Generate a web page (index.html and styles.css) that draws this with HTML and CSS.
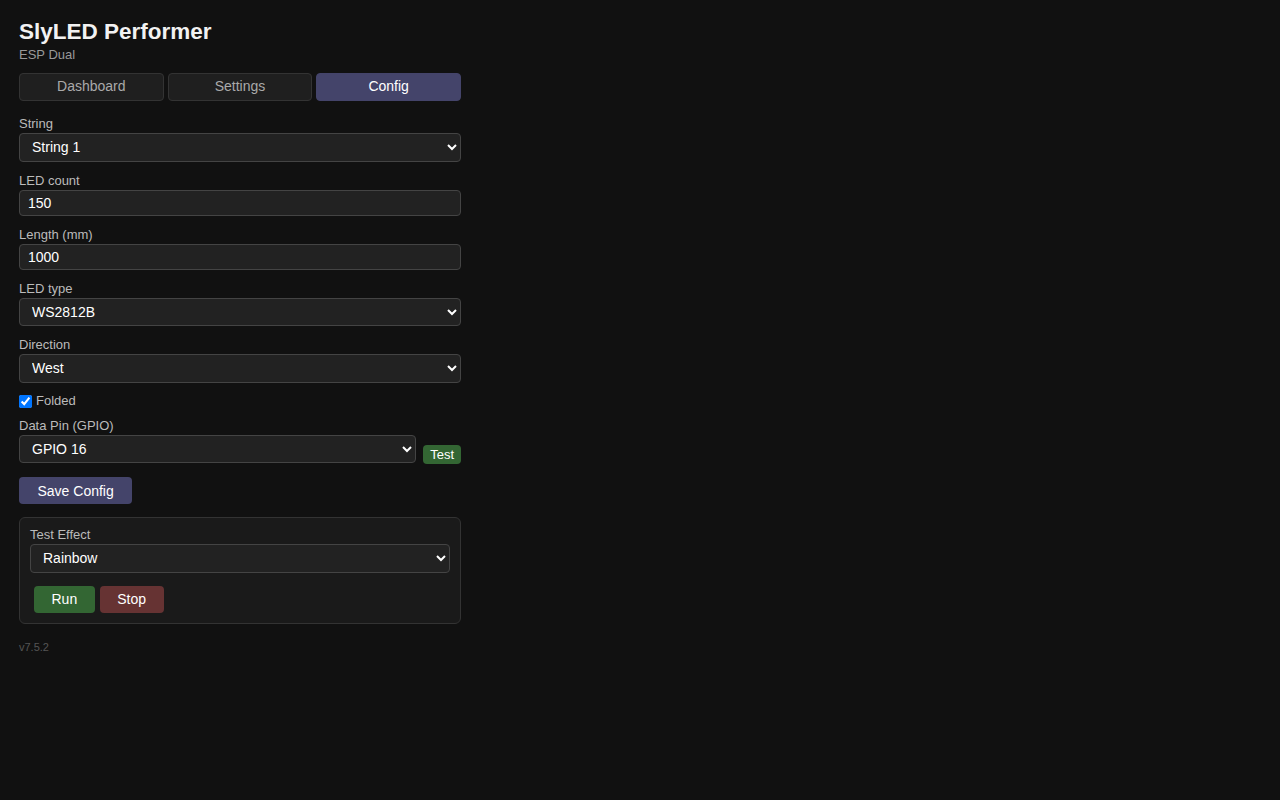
FILE: index.html
```html
<!DOCTYPE html>
<html lang="en">
<head>
<meta charset="utf-8">
<title>SlyLED Performer</title>
<link rel="stylesheet" href="styles.css">
</head>
<body>
<div class="wrap">
  <h1 class="title">SlyLED Performer</h1>
  <div class="sub">ESP Dual</div>
  <nav class="tabs">
    <button class="tab">Dashboard</button>
    <button class="tab">Settings</button>
    <button class="tab active">Config</button>
  </nav>

  <div class="field">
    <label class="lbl">String</label>
    <select class="ctl sel"><option>String 1</option></select>
  </div>
  <div class="field">
    <label class="lbl">LED count</label>
    <input class="ctl inp" type="text" value="150">
  </div>
  <div class="field">
    <label class="lbl">Length (mm)</label>
    <input class="ctl inp" type="text" value="1000">
  </div>
  <div class="field">
    <label class="lbl">LED type</label>
    <select class="ctl sel"><option>WS2812B</option></select>
  </div>
  <div class="field">
    <label class="lbl">Direction</label>
    <select class="ctl sel"><option>West</option></select>
  </div>
  <label class="check"><input type="checkbox" checked> Folded</label>
  <div class="field">
    <label class="lbl">Data Pin (GPIO)</label>
    <div class="pinrow">
      <select class="ctl sel"><option>GPIO 16</option></select>
      <button class="btn-test">Test</button>
    </div>
  </div>
  <button class="btn btn-save">Save Config</button>

  <div class="card">
    <label class="lbl">Test Effect</label>
    <select class="ctl sel"><option>Rainbow</option></select>
    <div class="actions">
      <button class="btn btn-run">Run</button>
      <button class="btn btn-stop">Stop</button>
    </div>
  </div>
  <div class="ver">v7.5.2</div>
</div>
</body>
</html>
```
FILE: styles.css
```css
html, body {
  margin: 0;
  padding: 0;
  background: #111111;
  color: #eeeeee;
  font-family: "Liberation Sans", Arial, sans-serif;
  color-scheme: dark;
}
.wrap {
  width: 442px;
  padding: 18px 19px 0;
}
.title {
  margin: 0;
  font-size: 22.5px;
  line-height: 28px;
  font-weight: bold;
  color: #f2f2f2;
}
.sub {
  font-size: 13px;
  line-height: 18px;
  color: #999999;
}
.tabs {
  display: flex;
  gap: 4px;
  margin-top: 9px;
  margin-bottom: 14px;
}
.tab {
  flex: 1;
  height: 28px;
  background: #1f1f1f;
  border: 1px solid #333333;
  border-radius: 4px;
  color: #aaaaaa;
  font-family: inherit;
  font-size: 14px;
  padding: 0 0 2px;
}
.tab.active {
  background: #44446a;
  border-color: #44446a;
  color: #ffffff;
}
.field {
  display: flex;
  flex-direction: column;
  margin-bottom: 10px;
}
.lbl {
  font-size: 13px;
  line-height: 18px;
  color: #bbbbbb;
  margin-bottom: 0;
}
.ctl {
  box-sizing: border-box;
  width: 100%;
  background: #222222;
  border: 1px solid #444444;
  border-radius: 4px;
  color: #ffffff;
  font-family: inherit;
  font-size: 14px;
  margin: 0;
}
.sel {
  height: 28.5px;
  padding: 0 8px;
}
.inp {
  height: 26px;
  padding: 0 8px;
}
.check {
  display: flex;
  align-items: center;
  gap: 4px;
  height: 13px;
  padding-top: 2px;
  font-size: 13px;
  line-height: 16px;
  color: #bbbbbb;
  margin: 0 0 9px;
}
.check input {
  margin: 0;
  width: 13px;
  height: 13px;
  accent-color: #0075ff;
}
.pinrow {
  display: flex;
  align-items: flex-end;
  gap: 7px;
}
.pinrow .sel {
  flex: 1;
  width: auto;
}
.btn-test {
  background: #336633;
  border: none;
  border-radius: 4px;
  color: #ffffff;
  font-family: inherit;
  font-size: 13px;
  height: 19px;
  padding: 0 7px;
  margin-bottom: -1px;
}
.btn {
  border: none;
  border-radius: 4px;
  color: #ffffff;
  font-family: inherit;
  font-size: 14px;
  height: 27px;
  padding: 0 18.5px;
}
.btn-save {
  background: #44446a;
  margin-top: 4px;
}
.card {
  margin-top: 13px;
  box-sizing: border-box;
  background: #1a1a1a;
  border: 1px solid #333333;
  border-radius: 6px;
  padding: 8px 10px 10px;
  display: flex;
  flex-direction: column;
}
.actions {
  display: flex;
  gap: 5px;
  margin-top: 13px;
  padding-left: 4px;
}
.btn-run {
  background: #336633;
  padding: 0 17.5px;
}
.btn-stop {
  background: #663333;
  padding: 0 17.5px;
}
.ver {
  margin-top: 17px;
  font-size: 11px;
  color: #555555;
}
```
